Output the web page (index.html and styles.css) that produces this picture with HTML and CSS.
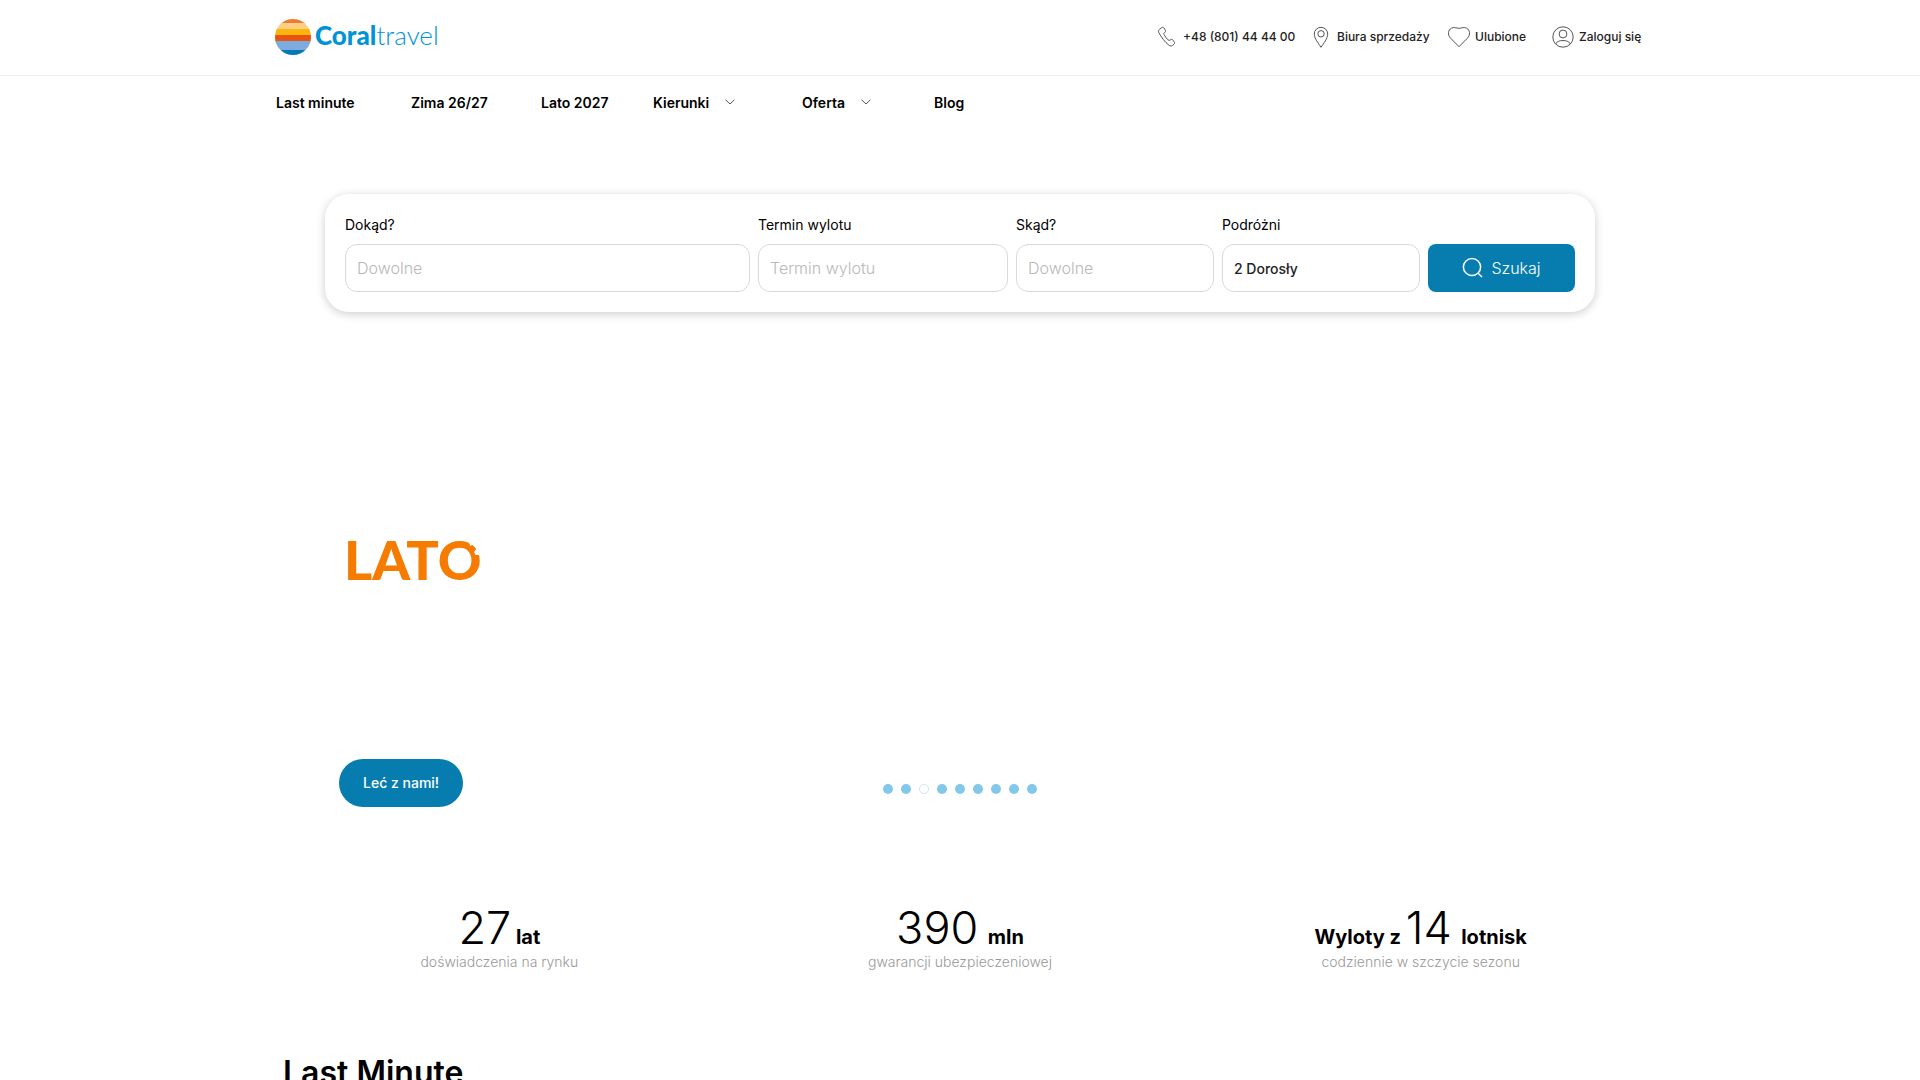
FILE: index.html
```
<!DOCTYPE html>
<html lang="pl">
<head>
<meta charset="UTF-8">
<meta name="viewport" content="width=device-width, initial-scale=1.0">
<title>Coral Travel</title>
<link rel="stylesheet" href="styles.css">
</head>
<body>
<header class="header">
  <div class="container topbar">
    <a class="logo" href="#">
      <svg class="logo-mark" width="36" height="36" viewBox="0 0 36 36">
        <clipPath id="sun"><circle cx="18" cy="18" r="18"/></clipPath>
        <g clip-path="url(#sun)">
          <rect width="36" height="5" fill="#f07b32"/>
          <rect y="4" width="36" height="7" fill="#ffce85"/>
          <rect y="10" width="36" height="7" fill="#fbb60d"/>
          <rect y="16" width="36" height="7" fill="#e9530f"/>
          <rect y="22" width="36" height="9" fill="#7babdf"/>
          <rect y="31" width="36" height="5" fill="#0477b5"/>
        </g>
      </svg>
      <span class="logo-text"><b>Coral</b>travel</span>
    </a>
    <div class="toplinks">
      <a href="#">
        <svg class="icon" viewBox="0 0 24 24"><path d="M3.200 3.600l1.900-1.400c.8-.6 1.900-.4 2.400.4l1.200 2c.5.8.4 1.600-.3 2.200l-.7.7c-.5.5-.5 1 0 1.800 1 1.800 2.400 3.700 3.900 5.100.6.6 1.100.7 1.700.3l.9-.5c.8-.5 1.700-.3 2.300.5l1.300 1.800c.5.8.4 1.600-.3 2.200l-1.400 1.100c-1.100.9-2.500.8-3.700-.1C8.600 16.800 4.300 11.200 2.200 6.800c-.5-1.200-.1-2.400 1-3.200z" transform="translate(1.500 .5)"/></svg>
        +48 (801) 44 44 00
      </a>
      <a href="#">
        <svg class="icon" viewBox="0 0 24 24"><path d="M12 22.300C9.500 18.500 5.300 13.500 5.300 9a6.700 6.700 0 0 1 13.400 0c0 4.500-4.200 9.500-6.700 13.300z"/><circle cx="12" cy="8.800" r="3.200"/></svg>
        Biura sprzedaży
      </a>
      <a href="#">
        <svg class="icon" viewBox="0 0 24 24"><path d="M12 21.700L3.600 13.200C.2 9.700 1.100 5 4.300 3.200 7.200 1.700 9.600 3.300 12 3.300s4.800-1.600 7.700-.1c3.200 1.800 4.100 6.500.7 10z"/></svg>
        Ulubione
      </a>
      <a href="#">
        <svg class="icon" viewBox="0 0 24 24"><circle cx="12" cy="12" r="10.200"/><circle cx="12" cy="9" r="3.900"/><path d="M4.700 19c.8-2.200 3.700-3.500 7.300-3.500s6.500 1.300 7.300 3.500"/></svg>
        Zaloguj się
      </a>
    </div>
  </div>
</header>

<nav class="container menu">
  <a href="#">Last minute</a>
  <a href="#">Zima 26/27</a>
  <a href="#">Lato 2027</a>
  <a href="#">Kierunki <svg class="chevron" viewBox="0 0 10 6"><path d="M.6.8L5 5 9.400.8"/></svg></a>
  <a href="#">Oferta <svg class="chevron" viewBox="0 0 10 6"><path d="M.6.8L5 5 9.400.8"/></svg></a>
  <a href="#">Blog</a>
</nav>

<main>
  <form class="search">
    <div class="field">
      <label for="destination">Dokąd?</label>
      <input id="destination" type="text" placeholder="Dowolne">
    </div>
    <div class="field">
      <label for="date">Termin wylotu</label>
      <input id="date" type="text" placeholder="Termin wylotu">
    </div>
    <div class="field">
      <label for="from">Skąd?</label>
      <input id="from" type="text" placeholder="Dowolne">
    </div>
    <div class="field">
      <label for="guests">Podróżni</label>
      <input id="guests" type="text" value="2 Dorosły">
    </div>
    <button class="search-btn" type="submit">
      <svg viewBox="0 0 22 22"><circle cx="10" cy="10" r="8.600"/><path d="M16.200 16.200l3.800 3.800"/></svg>
      Szukaj
    </button>
  </form>

  <section class="hero">
    <h2 class="hero-title">LATO
      <svg class="plane" viewBox="0 0 16 16"><path fill="#fff" d="M3 0L4 5 7 3.500 8.500 5.500 10.500 7.500 8 11 9.500 14 16 14 16 0z"/></svg>
    </h2>
    <div class="hero-bottom">
      <a class="hero-btn" href="#">Leć z nami!</a>
      <div class="dots">
        <button type="button" aria-label="1"></button>
        <button type="button" aria-label="2"></button>
        <button class="active" type="button" aria-label="3"></button>
        <button type="button" aria-label="4"></button>
        <button type="button" aria-label="5"></button>
        <button type="button" aria-label="6"></button>
        <button type="button" aria-label="7"></button>
        <button type="button" aria-label="8"></button>
        <button type="button" aria-label="9"></button>
      </div>
    </div>
  </section>

  <section class="stats">
    <div class="stat">
      <p class="stat-value"><span>27</span> lat</p>
      <p class="stat-label">doświadczenia na rynku</p>
    </div>
    <div class="stat">
      <p class="stat-value"><span>390</span> &nbsp;mln</p>
      <p class="stat-label">gwarancji ubezpieczeniowej</p>
    </div>
    <div class="stat">
      <p class="stat-value">Wyloty z <span>14</span> &nbsp;lotnisk</p>
      <p class="stat-label">codziennie w szczycie sezonu</p>
    </div>
  </section>

  <section class="container offers">
    <h2>Last Minute</h2>
  </section>
</main>
</body>
</html>
```
FILE: styles.css
```
* {
  box-sizing: border-box;
}

body {
  margin: 0;
  font-family: Inter, "Open Sans", sans-serif;
  font-size: 14px;
  color: #000;
  background-color: #fff;
}

a {
  color: inherit;
  text-decoration: none;
}

svg {
  fill: none;
  flex-shrink: 0;
}

.container {
  max-width: 1370px;
  margin: 0 auto;
}

/* header */
.header {
  border-bottom: 1px solid #f0f0f0;
}

.topbar {
  display: flex;
  justify-content: space-between;
  align-items: center;
  height: 75px;
  padding-bottom: 2px;
}

.logo {
  display: flex;
  align-items: center;
  gap: 4px;
}

.logo-text {
  padding-bottom: 3px;
  font-family: Lato, sans-serif;
  font-size: 26px;
  font-weight: 300;
  line-height: 32px;
  color: #0093d5;
}

.logo-text b {
  font-weight: 900;
}

.toplinks {
  display: grid;
  grid-template-columns: 154px 138px 104px 94px;
  font-size: 12px;
  font-weight: 500;
  color: #222;
}

.toplinks a {
  display: flex;
  align-items: center;
  gap: 4px;
  white-space: nowrap;
}

.icon {
  width: 24px;
  height: 24px;
  stroke: #555;
  stroke-width: 1;
}

/* menu */
.menu {
  display: grid;
  grid-template-columns: 135px 130px 112px 149px 132px auto;
  align-items: center;
  height: 54px;
  padding: 0 1px 2px;
  font-weight: 600;
}

.menu a {
  display: flex;
  align-items: center;
  gap: 16px;
}

.chevron {
  width: 10px;
  height: 6px;
  stroke: #555;
}

/* search */
.search {
  display: grid;
  grid-template-columns: 405fr 250fr 198fr 198fr 147fr;
  gap: 8px;
  align-items: end;
  max-width: 1270px;
  margin: 64px auto 0;
  padding: 20px;
  border-radius: 24px;
  box-shadow: 0 2px 10px rgba(0, 0, 0, 0.2);
}

.field label {
  display: block;
  margin-bottom: 8px;
  line-height: 22px;
}

.field input {
  display: block;
  width: 100%;
  height: 48px;
  padding: 0 11px;
  border: 1px solid #d9d9d9;
  border-radius: 12px;
  font-family: inherit;
  font-size: 14px;
  font-weight: 500;
  color: #222;
}

.field input::placeholder {
  font-size: 16px;
  font-weight: 300;
  color: #b8b8b8;
}

.search-btn {
  display: flex;
  justify-content: center;
  align-items: center;
  gap: 7px;
  height: 48px;
  border: none;
  border-radius: 8px;
  background-color: #077daf;
  color: #fff;
  font-family: inherit;
  font-size: 16px;
  font-weight: 300;
  cursor: pointer;
}

.search-btn svg {
  width: 22px;
  height: 22px;
  stroke: #fff;
  stroke-width: 1.5;
}

/* hero */
.hero {
  max-width: 1242px;
  margin: 0 auto;
  padding-top: 214px;
}

.hero-title {
  position: relative;
  width: fit-content;
  margin: 0 0 0 5px;
  font-family: Lato, sans-serif;
  font-size: 54px;
  font-weight: 900;
  line-height: 68px;
  color: #f57c00;
}

.plane {
  position: absolute;
  top: 15px;
  right: 0;
  width: 16px;
  height: 16px;
}

.hero-bottom {
  display: grid;
  grid-template-columns: 1fr auto 1fr;
  align-items: end;
  margin-top: 165px;
}

.hero-btn {
  justify-self: start;
  padding: 0 24px;
  border-radius: 24px;
  background-color: #077daf;
  color: #fff;
  font-weight: 500;
  line-height: 48px;
}

.dots {
  display: flex;
  gap: 8px;
  margin-bottom: 13px;
}

.dots button {
  width: 10px;
  height: 10px;
  padding: 0;
  border: none;
  border-radius: 50%;
  background-color: #82c8e8;
  cursor: pointer;
}

.dots .active {
  border: 1px solid #cbe8f5;
  background-color: #fff;
}

/* stats */
.stats {
  display: grid;
  grid-template-columns: 1fr 1fr 1fr;
  max-width: 1382px;
  margin: 104px auto 0;
  text-align: center;
}

.stat p {
  margin: 0;
  white-space: nowrap;
}

.stat-value {
  font-size: 20px;
  font-weight: 700;
  line-height: 34px;
}

.stat-value span {
  font-size: 45px;
  font-weight: 300;
}

.stat .stat-label {
  line-height: 16px;
  font-weight: 300;
  color: #999;
}

/* offers */
.offers {
  padding: 81px 8px 0;
}

.offers h2 {
  margin: 0;
  font-size: 32px;
  font-weight: 600;
  line-height: 44px;
}
```
